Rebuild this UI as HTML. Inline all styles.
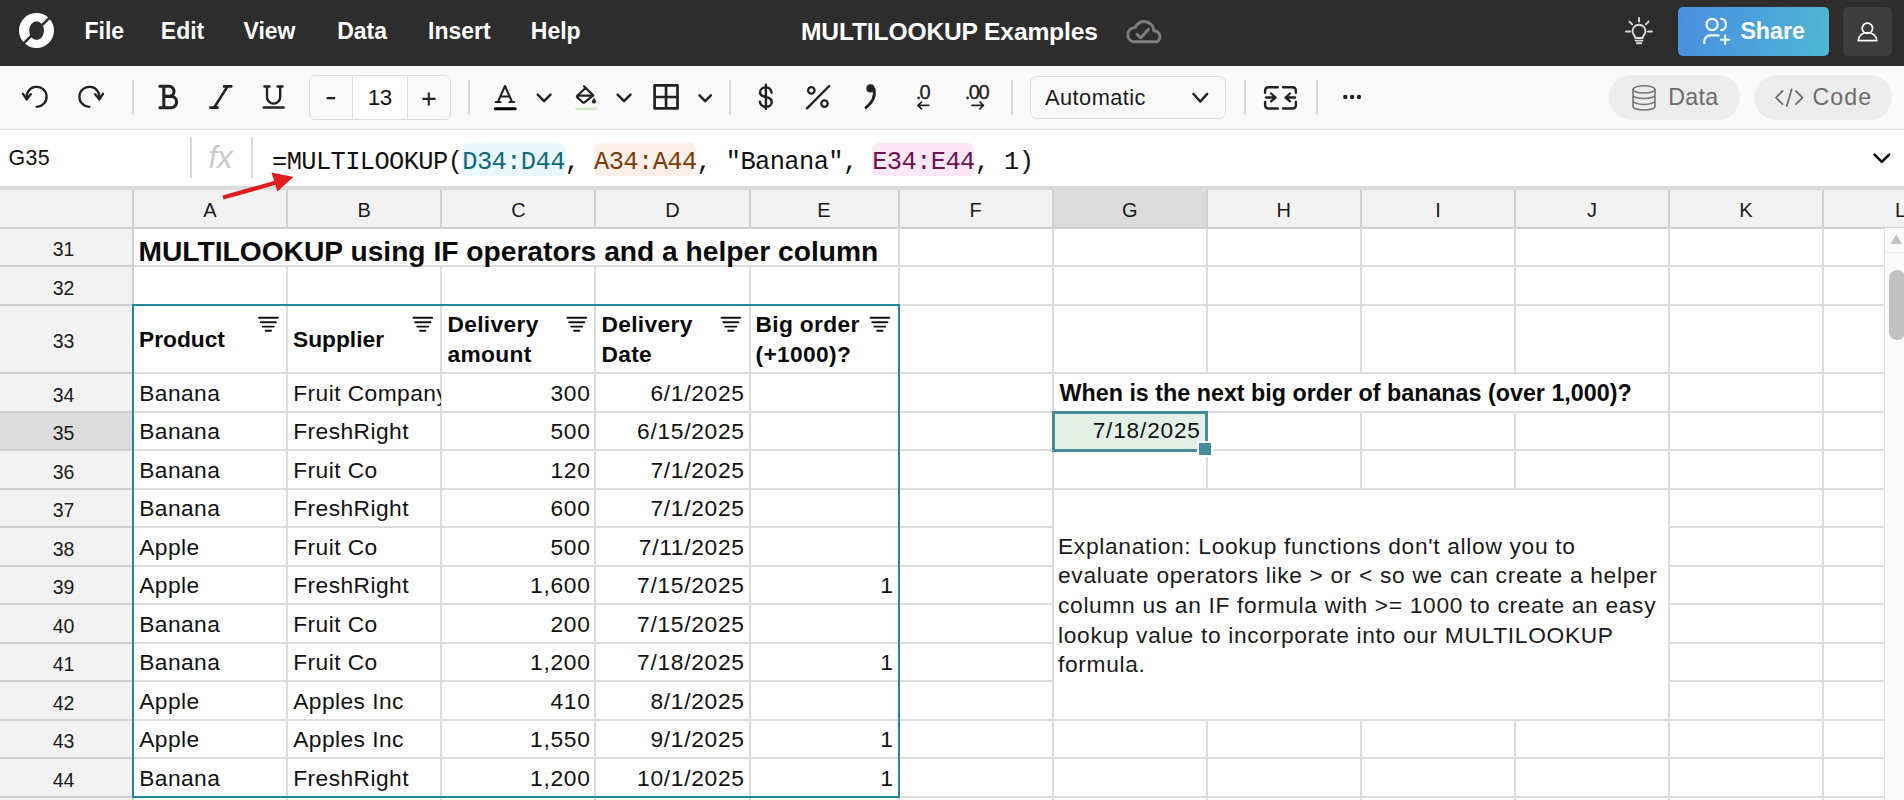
<!DOCTYPE html>
<html><head><meta charset="utf-8"><title>MULTILOOKUP Examples</title>
<style>
html,body{margin:0;padding:0;}
body{width:1904px;height:800px;overflow:hidden;position:relative;background:#fff;font-family:'Liberation Sans', sans-serif;}
.t{position:absolute;white-space:pre;}
.r{position:absolute;}
svg.ov{position:absolute;left:0;top:0;}
</style></head><body>
<div class="r" style="left:0.00px;top:190.00px;width:1904.00px;height:36.50px;background:#f2f2f2;"></div><div class="r" style="left:1053.60px;top:190.00px;width:152.20px;height:36.50px;background:#dcdcdc;"></div><div class="r" style="left:0.00px;top:228.50px;width:132.00px;height:572.00px;background:#f2f2f2;"></div><div class="r" style="left:0.00px;top:412.90px;width:132.00px;height:36.50px;background:#dcdcdc;"></div><div class="r" style="left:0.00px;top:226.50px;width:1904.00px;height:2.00px;background:#d0d0d0;"></div><div class="r" style="left:0.00px;top:265.00px;width:132.00px;height:2.00px;background:#d0d0d0;"></div><div class="r" style="left:134.00px;top:265.00px;width:1749.60px;height:2.00px;background:#dcdcdc;"></div><div class="r" style="left:0.00px;top:303.50px;width:132.00px;height:2.00px;background:#d0d0d0;"></div><div class="r" style="left:134.00px;top:303.50px;width:1749.60px;height:2.00px;background:#dcdcdc;"></div><div class="r" style="left:0.00px;top:372.40px;width:132.00px;height:2.00px;background:#d0d0d0;"></div><div class="r" style="left:134.00px;top:372.40px;width:1749.60px;height:2.00px;background:#dcdcdc;"></div><div class="r" style="left:0.00px;top:410.90px;width:132.00px;height:2.00px;background:#d0d0d0;"></div><div class="r" style="left:134.00px;top:410.90px;width:1749.60px;height:2.00px;background:#dcdcdc;"></div><div class="r" style="left:0.00px;top:449.40px;width:132.00px;height:2.00px;background:#d0d0d0;"></div><div class="r" style="left:134.00px;top:449.40px;width:1749.60px;height:2.00px;background:#dcdcdc;"></div><div class="r" style="left:0.00px;top:487.90px;width:132.00px;height:2.00px;background:#d0d0d0;"></div><div class="r" style="left:134.00px;top:487.90px;width:1749.60px;height:2.00px;background:#dcdcdc;"></div><div class="r" style="left:0.00px;top:526.40px;width:132.00px;height:2.00px;background:#d0d0d0;"></div><div class="r" style="left:134.00px;top:526.40px;width:1749.60px;height:2.00px;background:#dcdcdc;"></div><div class="r" style="left:0.00px;top:564.90px;width:132.00px;height:2.00px;background:#d0d0d0;"></div><div class="r" style="left:134.00px;top:564.90px;width:1749.60px;height:2.00px;background:#dcdcdc;"></div><div class="r" style="left:0.00px;top:603.40px;width:132.00px;height:2.00px;background:#d0d0d0;"></div><div class="r" style="left:134.00px;top:603.40px;width:1749.60px;height:2.00px;background:#dcdcdc;"></div><div class="r" style="left:0.00px;top:641.90px;width:132.00px;height:2.00px;background:#d0d0d0;"></div><div class="r" style="left:134.00px;top:641.90px;width:1749.60px;height:2.00px;background:#dcdcdc;"></div><div class="r" style="left:0.00px;top:680.40px;width:132.00px;height:2.00px;background:#d0d0d0;"></div><div class="r" style="left:134.00px;top:680.40px;width:1749.60px;height:2.00px;background:#dcdcdc;"></div><div class="r" style="left:0.00px;top:718.90px;width:132.00px;height:2.00px;background:#d0d0d0;"></div><div class="r" style="left:134.00px;top:718.90px;width:1749.60px;height:2.00px;background:#dcdcdc;"></div><div class="r" style="left:0.00px;top:757.40px;width:132.00px;height:2.00px;background:#d0d0d0;"></div><div class="r" style="left:134.00px;top:757.40px;width:1749.60px;height:2.00px;background:#dcdcdc;"></div><div class="r" style="left:0.00px;top:795.90px;width:132.00px;height:2.00px;background:#d0d0d0;"></div><div class="r" style="left:134.00px;top:795.90px;width:1749.60px;height:2.00px;background:#dcdcdc;"></div><div class="r" style="left:132.00px;top:190.00px;width:2.00px;height:36.50px;background:#d0d0d0;"></div><div class="r" style="left:286.00px;top:190.00px;width:2.00px;height:36.50px;background:#d0d0d0;"></div><div class="r" style="left:440.40px;top:190.00px;width:2.00px;height:36.50px;background:#d0d0d0;"></div><div class="r" style="left:594.40px;top:190.00px;width:2.00px;height:36.50px;background:#d0d0d0;"></div><div class="r" style="left:748.50px;top:190.00px;width:2.00px;height:36.50px;background:#d0d0d0;"></div><div class="r" style="left:897.50px;top:190.00px;width:2.00px;height:36.50px;background:#d0d0d0;"></div><div class="r" style="left:1051.60px;top:190.00px;width:2.00px;height:36.50px;background:#d0d0d0;"></div><div class="r" style="left:1205.80px;top:190.00px;width:2.00px;height:36.50px;background:#d0d0d0;"></div><div class="r" style="left:1359.90px;top:190.00px;width:2.00px;height:36.50px;background:#d0d0d0;"></div><div class="r" style="left:1514.00px;top:190.00px;width:2.00px;height:36.50px;background:#d0d0d0;"></div><div class="r" style="left:1668.00px;top:190.00px;width:2.00px;height:36.50px;background:#d0d0d0;"></div><div class="r" style="left:1822.00px;top:190.00px;width:2.00px;height:36.50px;background:#d0d0d0;"></div><div class="r" style="left:132.00px;top:228.30px;width:2.00px;height:572.00px;background:#d0d0d0;"></div><div class="r" style="left:286.00px;top:228.30px;width:2.00px;height:572.00px;background:#dcdcdc;"></div><div class="r" style="left:440.40px;top:228.30px;width:2.00px;height:572.00px;background:#dcdcdc;"></div><div class="r" style="left:594.40px;top:228.30px;width:2.00px;height:572.00px;background:#dcdcdc;"></div><div class="r" style="left:748.50px;top:228.30px;width:2.00px;height:572.00px;background:#dcdcdc;"></div><div class="r" style="left:897.50px;top:228.30px;width:2.00px;height:572.00px;background:#dcdcdc;"></div><div class="r" style="left:1051.60px;top:228.30px;width:2.00px;height:572.00px;background:#dcdcdc;"></div><div class="r" style="left:1205.80px;top:228.30px;width:2.00px;height:572.00px;background:#dcdcdc;"></div><div class="r" style="left:1359.90px;top:228.30px;width:2.00px;height:572.00px;background:#dcdcdc;"></div><div class="r" style="left:1514.00px;top:228.30px;width:2.00px;height:572.00px;background:#dcdcdc;"></div><div class="r" style="left:1668.00px;top:228.30px;width:2.00px;height:572.00px;background:#dcdcdc;"></div><div class="r" style="left:1822.00px;top:228.30px;width:2.00px;height:572.00px;background:#dcdcdc;"></div><div class="r" style="left:134.00px;top:228.50px;width:763.50px;height:36.50px;background:#fff;"></div><div class="r" style="left:1053.60px;top:489.90px;width:614.40px;height:229.00px;background:#fff;"></div><div class="r" style="left:1053.60px;top:374.40px;width:614.40px;height:36.50px;background:#fff;"></div><div class="t" style="top:200.27px;font:normal 400 20px/20px 'Liberation Sans', sans-serif;color:#1a1a1a;left:-390.00px;width:1200px;text-align:center;">A</div><div class="t" style="top:200.27px;font:normal 400 20px/20px 'Liberation Sans', sans-serif;color:#1a1a1a;left:-235.80px;width:1200px;text-align:center;">B</div><div class="t" style="top:200.27px;font:normal 400 20px/20px 'Liberation Sans', sans-serif;color:#1a1a1a;left:-81.60px;width:1200px;text-align:center;">C</div><div class="t" style="top:200.27px;font:normal 400 20px/20px 'Liberation Sans', sans-serif;color:#1a1a1a;left:72.45px;width:1200px;text-align:center;">D</div><div class="t" style="top:200.27px;font:normal 400 20px/20px 'Liberation Sans', sans-serif;color:#1a1a1a;left:224.00px;width:1200px;text-align:center;">E</div><div class="t" style="top:200.27px;font:normal 400 20px/20px 'Liberation Sans', sans-serif;color:#1a1a1a;left:375.55px;width:1200px;text-align:center;">F</div><div class="t" style="top:200.27px;font:normal 400 20px/20px 'Liberation Sans', sans-serif;color:#1a1a1a;left:529.70px;width:1200px;text-align:center;">G</div><div class="t" style="top:200.27px;font:normal 400 20px/20px 'Liberation Sans', sans-serif;color:#1a1a1a;left:683.85px;width:1200px;text-align:center;">H</div><div class="t" style="top:200.27px;font:normal 400 20px/20px 'Liberation Sans', sans-serif;color:#1a1a1a;left:837.95px;width:1200px;text-align:center;">I</div><div class="t" style="top:200.27px;font:normal 400 20px/20px 'Liberation Sans', sans-serif;color:#1a1a1a;left:992.00px;width:1200px;text-align:center;">J</div><div class="t" style="top:200.27px;font:normal 400 20px/20px 'Liberation Sans', sans-serif;color:#1a1a1a;left:1146.00px;width:1200px;text-align:center;">K</div><div class="t" style="top:200.27px;font:normal 400 20px/20px 'Liberation Sans', sans-serif;color:#1a1a1a;left:1300.50px;width:1200px;text-align:center;">L</div><div class="t" style="top:240.04px;font:normal 400 19.5px/19.5px 'Liberation Sans', sans-serif;color:#1a1a1a;left:-536.50px;width:1200px;text-align:center;">31</div><div class="t" style="top:278.54px;font:normal 400 19.5px/19.5px 'Liberation Sans', sans-serif;color:#1a1a1a;left:-536.50px;width:1200px;text-align:center;">32</div><div class="t" style="top:332.24px;font:normal 400 19.5px/19.5px 'Liberation Sans', sans-serif;color:#1a1a1a;left:-536.50px;width:1200px;text-align:center;">33</div><div class="t" style="top:385.94px;font:normal 400 19.5px/19.5px 'Liberation Sans', sans-serif;color:#1a1a1a;left:-536.50px;width:1200px;text-align:center;">34</div><div class="t" style="top:424.44px;font:normal 400 19.5px/19.5px 'Liberation Sans', sans-serif;color:#1a1a1a;left:-536.50px;width:1200px;text-align:center;">35</div><div class="t" style="top:462.94px;font:normal 400 19.5px/19.5px 'Liberation Sans', sans-serif;color:#1a1a1a;left:-536.50px;width:1200px;text-align:center;">36</div><div class="t" style="top:501.44px;font:normal 400 19.5px/19.5px 'Liberation Sans', sans-serif;color:#1a1a1a;left:-536.50px;width:1200px;text-align:center;">37</div><div class="t" style="top:539.94px;font:normal 400 19.5px/19.5px 'Liberation Sans', sans-serif;color:#1a1a1a;left:-536.50px;width:1200px;text-align:center;">38</div><div class="t" style="top:578.44px;font:normal 400 19.5px/19.5px 'Liberation Sans', sans-serif;color:#1a1a1a;left:-536.50px;width:1200px;text-align:center;">39</div><div class="t" style="top:616.94px;font:normal 400 19.5px/19.5px 'Liberation Sans', sans-serif;color:#1a1a1a;left:-536.50px;width:1200px;text-align:center;">40</div><div class="t" style="top:655.44px;font:normal 400 19.5px/19.5px 'Liberation Sans', sans-serif;color:#1a1a1a;left:-536.50px;width:1200px;text-align:center;">41</div><div class="t" style="top:693.94px;font:normal 400 19.5px/19.5px 'Liberation Sans', sans-serif;color:#1a1a1a;left:-536.50px;width:1200px;text-align:center;">42</div><div class="t" style="top:732.44px;font:normal 400 19.5px/19.5px 'Liberation Sans', sans-serif;color:#1a1a1a;left:-536.50px;width:1200px;text-align:center;">43</div><div class="t" style="top:770.94px;font:normal 400 19.5px/19.5px 'Liberation Sans', sans-serif;color:#1a1a1a;left:-536.50px;width:1200px;text-align:center;">44</div><div class="r" style="left:1883.60px;top:228.30px;width:20.40px;height:572.00px;background:#fafafa;border-left:1px solid #e2e2e2;"></div><div class="r" style="left:1884.60px;top:252.00px;width:19.40px;height:1.00px;background:#e6e6e6;"></div><div class="r" style="left:1888.5px;top:270px;width:16px;height:70px;background:#c2c2c2;border-radius:8px;"></div><svg class="ov" width="1904" height="800" style="left:0;top:0"><path d="M1890.6,244 L1896.3,234.2 L1902,244 Z" fill="#c4c4c4"/></svg><div class="t" style="top:236.63px;font:normal 700 28.2px/28.2px 'Liberation Sans', sans-serif;color:#0a0a0a;left:138.50px;">MULTILOOKUP using IF operators and a helper column</div><div class="t" style="top:327.74px;font:normal 700 22.75px/22.75px 'Liberation Sans', sans-serif;color:#0a0a0a;left:139.00px;">Product</div><div class="t" style="top:327.74px;font:normal 700 22.75px/22.75px 'Liberation Sans', sans-serif;color:#0a0a0a;left:293.00px;">Supplier</div><div class="t" style="top:313.04px;font:normal 700 22.75px/22.75px 'Liberation Sans', sans-serif;color:#0a0a0a;letter-spacing:0.35px;left:447.40px;">Delivery</div><div class="t" style="top:342.54px;font:normal 700 22.75px/22.75px 'Liberation Sans', sans-serif;color:#0a0a0a;letter-spacing:0.35px;left:447.40px;">amount</div><div class="t" style="top:313.04px;font:normal 700 22.75px/22.75px 'Liberation Sans', sans-serif;color:#0a0a0a;letter-spacing:0.35px;left:601.40px;">Delivery</div><div class="t" style="top:342.54px;font:normal 700 22.75px/22.75px 'Liberation Sans', sans-serif;color:#0a0a0a;letter-spacing:0.35px;left:601.40px;">Date</div><div class="t" style="top:313.04px;font:normal 700 22.75px/22.75px 'Liberation Sans', sans-serif;color:#0a0a0a;letter-spacing:0.35px;left:755.50px;">Big order</div><div class="t" style="top:342.54px;font:normal 700 22.75px/22.75px 'Liberation Sans', sans-serif;color:#0a0a0a;letter-spacing:0.35px;left:755.50px;">(+1000)?</div><div class="t" style="top:381.99px;font:normal 400 22.75px/22.75px 'Liberation Sans', sans-serif;color:#111;letter-spacing:0.45px;left:139.20px;">Banana</div><div class="r" style="left:288.00px;top:374.40px;width:152.90px;height:36.50px;overflow:hidden;"><div class="t" style="top:7.59px;font:normal 400 22.75px/22.75px 'Liberation Sans', sans-serif;color:#111;letter-spacing:0.45px;left:5.20px;">Fruit Company</div></div><div class="t" style="top:381.99px;font:normal 400 22.75px/22.75px 'Liberation Sans', sans-serif;color:#111;letter-spacing:0.7px;left:-609.50px;width:1200px;text-align:right;">300</div><div class="t" style="top:381.99px;font:normal 400 22.75px/22.75px 'Liberation Sans', sans-serif;color:#111;letter-spacing:0.7px;left:-455.40px;width:1200px;text-align:right;">6/1/2025</div><div class="t" style="top:420.49px;font:normal 400 22.75px/22.75px 'Liberation Sans', sans-serif;color:#111;letter-spacing:0.45px;left:139.20px;">Banana</div><div class="t" style="top:420.49px;font:normal 400 22.75px/22.75px 'Liberation Sans', sans-serif;color:#111;letter-spacing:0.45px;left:293.20px;">FreshRight</div><div class="t" style="top:420.49px;font:normal 400 22.75px/22.75px 'Liberation Sans', sans-serif;color:#111;letter-spacing:0.7px;left:-609.50px;width:1200px;text-align:right;">500</div><div class="t" style="top:420.49px;font:normal 400 22.75px/22.75px 'Liberation Sans', sans-serif;color:#111;letter-spacing:0.7px;left:-455.40px;width:1200px;text-align:right;">6/15/2025</div><div class="t" style="top:458.99px;font:normal 400 22.75px/22.75px 'Liberation Sans', sans-serif;color:#111;letter-spacing:0.45px;left:139.20px;">Banana</div><div class="t" style="top:458.99px;font:normal 400 22.75px/22.75px 'Liberation Sans', sans-serif;color:#111;letter-spacing:0.45px;left:293.20px;">Fruit Co</div><div class="t" style="top:458.99px;font:normal 400 22.75px/22.75px 'Liberation Sans', sans-serif;color:#111;letter-spacing:0.7px;left:-609.50px;width:1200px;text-align:right;">120</div><div class="t" style="top:458.99px;font:normal 400 22.75px/22.75px 'Liberation Sans', sans-serif;color:#111;letter-spacing:0.7px;left:-455.40px;width:1200px;text-align:right;">7/1/2025</div><div class="t" style="top:497.49px;font:normal 400 22.75px/22.75px 'Liberation Sans', sans-serif;color:#111;letter-spacing:0.45px;left:139.20px;">Banana</div><div class="t" style="top:497.49px;font:normal 400 22.75px/22.75px 'Liberation Sans', sans-serif;color:#111;letter-spacing:0.45px;left:293.20px;">FreshRight</div><div class="t" style="top:497.49px;font:normal 400 22.75px/22.75px 'Liberation Sans', sans-serif;color:#111;letter-spacing:0.7px;left:-609.50px;width:1200px;text-align:right;">600</div><div class="t" style="top:497.49px;font:normal 400 22.75px/22.75px 'Liberation Sans', sans-serif;color:#111;letter-spacing:0.7px;left:-455.40px;width:1200px;text-align:right;">7/1/2025</div><div class="t" style="top:535.99px;font:normal 400 22.75px/22.75px 'Liberation Sans', sans-serif;color:#111;letter-spacing:0.45px;left:139.20px;">Apple</div><div class="t" style="top:535.99px;font:normal 400 22.75px/22.75px 'Liberation Sans', sans-serif;color:#111;letter-spacing:0.45px;left:293.20px;">Fruit Co</div><div class="t" style="top:535.99px;font:normal 400 22.75px/22.75px 'Liberation Sans', sans-serif;color:#111;letter-spacing:0.7px;left:-609.50px;width:1200px;text-align:right;">500</div><div class="t" style="top:535.99px;font:normal 400 22.75px/22.75px 'Liberation Sans', sans-serif;color:#111;letter-spacing:0.7px;left:-455.40px;width:1200px;text-align:right;">7/11/2025</div><div class="t" style="top:574.49px;font:normal 400 22.75px/22.75px 'Liberation Sans', sans-serif;color:#111;letter-spacing:0.45px;left:139.20px;">Apple</div><div class="t" style="top:574.49px;font:normal 400 22.75px/22.75px 'Liberation Sans', sans-serif;color:#111;letter-spacing:0.45px;left:293.20px;">FreshRight</div><div class="t" style="top:574.49px;font:normal 400 22.75px/22.75px 'Liberation Sans', sans-serif;color:#111;letter-spacing:0.7px;left:-609.50px;width:1200px;text-align:right;">1,600</div><div class="t" style="top:574.49px;font:normal 400 22.75px/22.75px 'Liberation Sans', sans-serif;color:#111;letter-spacing:0.7px;left:-455.40px;width:1200px;text-align:right;">7/15/2025</div><div class="t" style="top:574.49px;font:normal 400 22.75px/22.75px 'Liberation Sans', sans-serif;color:#111;letter-spacing:0.7px;left:-306.40px;width:1200px;text-align:right;">1</div><div class="t" style="top:612.99px;font:normal 400 22.75px/22.75px 'Liberation Sans', sans-serif;color:#111;letter-spacing:0.45px;left:139.20px;">Banana</div><div class="t" style="top:612.99px;font:normal 400 22.75px/22.75px 'Liberation Sans', sans-serif;color:#111;letter-spacing:0.45px;left:293.20px;">Fruit Co</div><div class="t" style="top:612.99px;font:normal 400 22.75px/22.75px 'Liberation Sans', sans-serif;color:#111;letter-spacing:0.7px;left:-609.50px;width:1200px;text-align:right;">200</div><div class="t" style="top:612.99px;font:normal 400 22.75px/22.75px 'Liberation Sans', sans-serif;color:#111;letter-spacing:0.7px;left:-455.40px;width:1200px;text-align:right;">7/15/2025</div><div class="t" style="top:651.49px;font:normal 400 22.75px/22.75px 'Liberation Sans', sans-serif;color:#111;letter-spacing:0.45px;left:139.20px;">Banana</div><div class="t" style="top:651.49px;font:normal 400 22.75px/22.75px 'Liberation Sans', sans-serif;color:#111;letter-spacing:0.45px;left:293.20px;">Fruit Co</div><div class="t" style="top:651.49px;font:normal 400 22.75px/22.75px 'Liberation Sans', sans-serif;color:#111;letter-spacing:0.7px;left:-609.50px;width:1200px;text-align:right;">1,200</div><div class="t" style="top:651.49px;font:normal 400 22.75px/22.75px 'Liberation Sans', sans-serif;color:#111;letter-spacing:0.7px;left:-455.40px;width:1200px;text-align:right;">7/18/2025</div><div class="t" style="top:651.49px;font:normal 400 22.75px/22.75px 'Liberation Sans', sans-serif;color:#111;letter-spacing:0.7px;left:-306.40px;width:1200px;text-align:right;">1</div><div class="t" style="top:689.99px;font:normal 400 22.75px/22.75px 'Liberation Sans', sans-serif;color:#111;letter-spacing:0.45px;left:139.20px;">Apple</div><div class="t" style="top:689.99px;font:normal 400 22.75px/22.75px 'Liberation Sans', sans-serif;color:#111;letter-spacing:0.45px;left:293.20px;">Apples Inc</div><div class="t" style="top:689.99px;font:normal 400 22.75px/22.75px 'Liberation Sans', sans-serif;color:#111;letter-spacing:0.7px;left:-609.50px;width:1200px;text-align:right;">410</div><div class="t" style="top:689.99px;font:normal 400 22.75px/22.75px 'Liberation Sans', sans-serif;color:#111;letter-spacing:0.7px;left:-455.40px;width:1200px;text-align:right;">8/1/2025</div><div class="t" style="top:728.49px;font:normal 400 22.75px/22.75px 'Liberation Sans', sans-serif;color:#111;letter-spacing:0.45px;left:139.20px;">Apple</div><div class="t" style="top:728.49px;font:normal 400 22.75px/22.75px 'Liberation Sans', sans-serif;color:#111;letter-spacing:0.45px;left:293.20px;">Apples Inc</div><div class="t" style="top:728.49px;font:normal 400 22.75px/22.75px 'Liberation Sans', sans-serif;color:#111;letter-spacing:0.7px;left:-609.50px;width:1200px;text-align:right;">1,550</div><div class="t" style="top:728.49px;font:normal 400 22.75px/22.75px 'Liberation Sans', sans-serif;color:#111;letter-spacing:0.7px;left:-455.40px;width:1200px;text-align:right;">9/1/2025</div><div class="t" style="top:728.49px;font:normal 400 22.75px/22.75px 'Liberation Sans', sans-serif;color:#111;letter-spacing:0.7px;left:-306.40px;width:1200px;text-align:right;">1</div><div class="t" style="top:766.99px;font:normal 400 22.75px/22.75px 'Liberation Sans', sans-serif;color:#111;letter-spacing:0.45px;left:139.20px;">Banana</div><div class="t" style="top:766.99px;font:normal 400 22.75px/22.75px 'Liberation Sans', sans-serif;color:#111;letter-spacing:0.45px;left:293.20px;">FreshRight</div><div class="t" style="top:766.99px;font:normal 400 22.75px/22.75px 'Liberation Sans', sans-serif;color:#111;letter-spacing:0.7px;left:-609.50px;width:1200px;text-align:right;">1,200</div><div class="t" style="top:766.99px;font:normal 400 22.75px/22.75px 'Liberation Sans', sans-serif;color:#111;letter-spacing:0.7px;left:-455.40px;width:1200px;text-align:right;">10/1/2025</div><div class="t" style="top:766.99px;font:normal 400 22.75px/22.75px 'Liberation Sans', sans-serif;color:#111;letter-spacing:0.7px;left:-306.40px;width:1200px;text-align:right;">1</div><div class="r" style="left:132px;top:303.8px;width:766px;height:494px;border:2px solid #22889a;box-sizing:border-box;width:768px;"></div><svg class="ov" width="1904" height="800"><g stroke="#111" stroke-width="1.9" stroke-linecap="round"><line x1="259.00" y1="317.80" x2="277.80" y2="317.80"/><line x1="260.80" y1="322.20" x2="275.90" y2="322.20"/><line x1="262.80" y1="326.60" x2="273.80" y2="326.60"/><line x1="265.70" y1="330.80" x2="271.00" y2="330.80"/><line x1="413.40" y1="317.80" x2="432.20" y2="317.80"/><line x1="415.20" y1="322.20" x2="430.30" y2="322.20"/><line x1="417.20" y1="326.60" x2="428.20" y2="326.60"/><line x1="420.10" y1="330.80" x2="425.40" y2="330.80"/><line x1="567.40" y1="317.80" x2="586.20" y2="317.80"/><line x1="569.20" y1="322.20" x2="584.30" y2="322.20"/><line x1="571.20" y1="326.60" x2="582.20" y2="326.60"/><line x1="574.10" y1="330.80" x2="579.40" y2="330.80"/><line x1="721.50" y1="317.80" x2="740.30" y2="317.80"/><line x1="723.30" y1="322.20" x2="738.40" y2="322.20"/><line x1="725.30" y1="326.60" x2="736.30" y2="326.60"/><line x1="728.20" y1="330.80" x2="733.50" y2="330.80"/><line x1="870.50" y1="317.80" x2="889.30" y2="317.80"/><line x1="872.30" y1="322.20" x2="887.40" y2="322.20"/><line x1="874.30" y1="326.60" x2="885.30" y2="326.60"/><line x1="877.20" y1="330.80" x2="882.50" y2="330.80"/></g></svg><div class="t" style="top:381.78px;font:normal 700 23.3px/23.3px 'Liberation Sans', sans-serif;color:#0a0a0a;left:1059.50px;">When is the next big order of bananas (over 1,000)?</div><div class="r" style="left:1051.60px;top:411.30px;width:156.20px;height:40.30px;background:#e2f0e6;border:3px solid #468d9b;box-sizing:border-box;"></div><div class="t" style="top:420.27px;font:normal 400 22.6px/22.6px 'Liberation Sans', sans-serif;color:#111;letter-spacing:0.85px;left:0.80px;width:1200px;text-align:right;">7/18/2025</div><div class="r" style="left:1196.50px;top:440.50px;width:16.00px;height:16.00px;background:#fff;"></div><div class="r" style="left:1198.80px;top:442.60px;width:12.00px;height:12.00px;background:#468d9b;"></div><div class="t" style="top:534.74px;font:normal 400 22.75px/22.75px 'Liberation Sans', sans-serif;color:#1a1a1a;letter-spacing:0.68px;left:1058.00px;">Explanation: Lookup functions don&#x27;t allow you to</div><div class="t" style="top:564.34px;font:normal 400 22.75px/22.75px 'Liberation Sans', sans-serif;color:#1a1a1a;letter-spacing:0.68px;left:1058.00px;">evaluate operators like &gt; or &lt; so we can create a helper</div><div class="t" style="top:593.94px;font:normal 400 22.75px/22.75px 'Liberation Sans', sans-serif;color:#1a1a1a;letter-spacing:0.68px;left:1058.00px;">column us an IF formula with &gt;= 1000 to create an easy</div><div class="t" style="top:623.54px;font:normal 400 22.75px/22.75px 'Liberation Sans', sans-serif;color:#1a1a1a;letter-spacing:0.68px;left:1058.00px;">lookup value to incorporate into our MULTILOOKUP</div><div class="t" style="top:653.14px;font:normal 400 22.75px/22.75px 'Liberation Sans', sans-serif;color:#1a1a1a;letter-spacing:0.68px;left:1058.00px;">formula.</div><div class="r" style="left:0.00px;top:0.00px;width:1904.00px;height:65.60px;background:#2d2d2d;"></div><div class="r" style="left:1677.9px;top:7px;width:151.1px;height:48.8px;border-radius:5px;background:linear-gradient(100deg,#4a8fe0 0%,#4ba4da 55%,#4fb8d2 100%);"></div><div class="r" style="left:1843px;top:7px;width:49px;height:48.7px;border-radius:5px;background:#3d3d3d;"></div><div class="t" style="top:19.53px;font:normal 700 23.0px/23.0px 'Liberation Sans', sans-serif;color:#fff;left:84.50px;">File</div><div class="t" style="top:19.53px;font:normal 700 23.0px/23.0px 'Liberation Sans', sans-serif;color:#fff;left:160.80px;">Edit</div><div class="t" style="top:19.53px;font:normal 700 23.0px/23.0px 'Liberation Sans', sans-serif;color:#fff;left:243.50px;">View</div><div class="t" style="top:19.53px;font:normal 700 23.0px/23.0px 'Liberation Sans', sans-serif;color:#fff;left:337.20px;">Data</div><div class="t" style="top:19.53px;font:normal 700 23.0px/23.0px 'Liberation Sans', sans-serif;color:#fff;left:428.00px;">Insert</div><div class="t" style="top:19.53px;font:normal 700 23.0px/23.0px 'Liberation Sans', sans-serif;color:#fff;left:530.80px;">Help</div><div class="t" style="top:20.18px;font:normal 700 24.6px/24.6px 'Liberation Sans', sans-serif;color:#fff;letter-spacing:-0.15px;left:801.00px;">MULTILOOKUP Examples</div><div class="t" style="top:19.76px;font:normal 700 23.2px/23.2px 'Liberation Sans', sans-serif;color:#fff;left:1740.40px;">Share</div><div class="r" style="left:0.00px;top:65.60px;width:1904.00px;height:63.40px;background:#fafafa;"></div><div class="r" style="left:0.00px;top:129.00px;width:1904.00px;height:1.20px;background:#dedede;"></div><div class="r" style="left:132.00px;top:80.30px;width:2.00px;height:34.30px;background:#d9d9d9;"></div><div class="r" style="left:468.40px;top:80.30px;width:2.00px;height:34.30px;background:#d9d9d9;"></div><div class="r" style="left:728.90px;top:80.30px;width:2.00px;height:34.30px;background:#d9d9d9;"></div><div class="r" style="left:1010.90px;top:80.30px;width:2.00px;height:34.30px;background:#d9d9d9;"></div><div class="r" style="left:1244.00px;top:80.30px;width:2.00px;height:34.30px;background:#d9d9d9;"></div><div class="r" style="left:1315.80px;top:80.30px;width:2.00px;height:34.30px;background:#d9d9d9;"></div><div class="r" style="left:309.2px;top:75.2px;width:141.5px;height:44.4px;border:1px solid #dcdcdc;border-radius:6px;box-sizing:border-box;background:#fafafa;"></div><div class="r" style="left:352.50px;top:76.20px;width:55.00px;height:42.40px;background:#fff;"></div><div class="r" style="left:352.00px;top:76.20px;width:1.00px;height:42.40px;background:#dcdcdc;"></div><div class="r" style="left:407.00px;top:76.20px;width:1.00px;height:42.40px;background:#dcdcdc;"></div><div class="t" style="top:87.32px;font:normal 400 22.3px/22.3px 'Liberation Sans', sans-serif;color:#111;letter-spacing:-0.3px;left:-220.20px;width:1200px;text-align:center;">13</div><div class="r" style="left:1030.4px;top:76.4px;width:195.2px;height:43.1px;border:1px solid #dcdcdc;border-radius:6px;box-sizing:border-box;"></div><div class="t" style="top:87.15px;font:normal 400 21.8px/21.8px 'Liberation Sans', sans-serif;color:#1a1a1a;letter-spacing:0.45px;left:1045.00px;">Automatic</div><div class="r" style="left:1609.3px;top:74.8px;width:130.7px;height:45px;border-radius:22.5px;background:#ececec;"></div><div class="r" style="left:1754px;top:74.8px;width:137.9px;height:45px;border-radius:22.5px;background:#ececec;"></div><div class="t" style="top:85.96px;font:normal 400 23.2px/23.2px 'Liberation Sans', sans-serif;color:#6b6b6b;letter-spacing:0.3px;left:1668.30px;">Data</div><div class="t" style="top:85.96px;font:normal 400 23.2px/23.2px 'Liberation Sans', sans-serif;color:#6b6b6b;letter-spacing:1.0px;left:1812.60px;">Code</div><svg class="ov" width="1904" height="800"><path fill="#fff" fill-rule="evenodd" d="M19,30.5 A17.5,17.5 0 0 1 54,30.5 A17.5,17.5 0 0 1 19,30.5 Z M29.2,30.6 A7.4,9.45 0 0 0 44,30.6 A7.4,9.45 0 0 0 29.2,30.6 Z"/><line x1="20.3" y1="46.6" x2="52.7" y2="14.6" stroke="#2d2d2d" stroke-width="2.6"/><g fill="none" stroke="#7e7e7e" stroke-width="2.9" stroke-linejoin="round" stroke-linecap="round"><path transform="translate(1144,43.3) scale(1.085,1.055) translate(-1144,-43.3)" d="M1134,41.8 A6.8,6.8 0 0 1 1135.8,28.45 A9,9 0 0 1 1153.2,31.6 A5.5,5.5 0 0 1 1156,41.8 Z" stroke-width="2.75"/><path d="M1137,34.4 L1140.9,37.8 L1148.5,29.2"/></g><g fill="none" stroke="#dcdcdc" stroke-width="1.9" stroke-linecap="round"><line x1="1639" y1="18" x2="1639" y2="21.6"/><line x1="1626" y1="31.5" x2="1630" y2="31.5"/><line x1="1648" y1="31.5" x2="1652" y2="31.5"/><line x1="1629.4" y1="21.6" x2="1632.2" y2="24.4"/><line x1="1648.6" y1="21.6" x2="1645.8" y2="24.4"/><path d="M1635.5,38 C1635.5,35.8 1632.5,34.5 1632.5,31.2 A6.5,6.5 0 0 1 1645.5,31.2 C1645.5,34.5 1642.5,35.8 1642.5,38 Z"/><line x1="1635.6" y1="40.6" x2="1642.4" y2="40.6"/><line x1="1636.8" y1="43.2" x2="1641.2" y2="43.2"/></g><g fill="none" stroke="#fff" stroke-width="2.1" stroke-linecap="round"><circle cx="1712.1" cy="24.5" r="5.6"/><path d="M1721.2,18.8 A5.8,5.8 0 0 1 1721.2,30.2"/><path d="M1704.3,43.2 L1704.3,41.5 A6,6 0 0 1 1710.3,35.4 L1718.6,35.4"/><line x1="1725.1" y1="35.6" x2="1725.1" y2="44"/><line x1="1720.9" y1="39.8" x2="1729.3" y2="39.8"/></g><g fill="none" stroke="#fff" stroke-width="1.7"><circle cx="1867.4" cy="28.3" r="5.2"/><path d="M1858.2,40.7 A9.3,8.2 0 0 1 1876.8,40.7 Z" stroke-linejoin="round"/></g><g fill="none" stroke="#222" stroke-width="2.3" stroke-linecap="round" stroke-linejoin="round"><path d="M159.9,86.3 H169 A5.05,5.05 0 0 1 169,96.4 H163.8 M163.8,96.4 H171 A5.65,5.65 0 0 1 171,107.7 H159.9 M163.8,86.3 V107.7" stroke-width="3.1"/><path d="M36.6,106.8 A10,10 0 1 0 26.9,99.2"/><path d="M23,93.8 L26.7,99.3 L30.8,94.2"/><path d="M89.4,106.8 A10,10 0 1 1 99.1,99.2"/><path d="M103,93.8 L99.3,99.3 L95.2,94.2"/><path d="M224.1,86.4 L231.3,86.4 M227.4,86.6 L214.2,107.5 M210.3,107.6 L217.6,107.6" stroke-width="2.6"/><path d="M264.4,86.5 L269.6,86.5 M277.6,86.5 L282.6,86.5 M267,86.6 L267,97 A6.6,6.6 0 0 0 280.2,97 L280.2,86.6" stroke-width="2.4"/><path d="M263.8,107.5 L283.6,107.5" stroke-width="2.5"/><path d="M498.1,101.7 L505,86 L512,101.7 M501.5,96.5 L508.6,96.5 M495.7,102 L500.5,102 M509.5,102 L514.2,102" stroke-width="2.1"/><path d="M495.3,108.7 L515.2,108.7" stroke="#000" stroke-width="3"/><path d="M537.7,94.69999999999999 L544.1,101.1 L550.5,94.69999999999999" stroke-width="2.5"/><path d="M617.65,94.69999999999999 L624.05,101.1 L630.4499999999999,94.69999999999999" stroke-width="2.5"/><path d="M699.5,95.39999999999999 L705.2,101.1 L710.9000000000001,95.39999999999999" stroke-width="2.5"/><path d="M584,86.2 L593.2,95.4 L584.6,102.3 Q583.6,103 582.6,102.3 L577.3,97.4 Q576.5,96.5 577.3,95.7 L585.5,88" stroke-width="2.2"/><path d="M577.5,95.6 L593,95.6" stroke-width="2.2"/><path d="M594,98.4 Q595.9,100.7 595.9,101.3 A1.9,1.9 0 0 1 592.1,101.3 Q592.1,100.7 594,98.4 Z" fill="#222" stroke-width="0.6"/><path d="M576.6,108.8 L595.8,108.8" stroke="#d3ead0" stroke-width="2.8"/><path d="M654.6,85.4 H677.5 V108.4 H654.6 Z M666.05,85.4 V108.4 M654.6,97 H677.5" stroke-width="2.7"/><circle cx="811.3" cy="90.4" r="3.2" stroke-width="2.3"/><circle cx="824.5" cy="103.6" r="3.2" stroke-width="2.3"/><path d="M807,108.3 L829.2,86" stroke-width="2.4"/><path d="M771.6,92.6 C771,89.2 768.6,87.4 765.9,87.4 C762.6,87.4 760,89.6 760,92.4 C760,95.6 763,96.4 765.9,97 C769,97.6 771.8,98.6 771.8,102 C771.8,104.9 769.2,106.8 765.9,106.8 C762.8,106.8 760.4,105 759.8,101.6 M765.9,84.8 V109" stroke-width="2.4"/><circle cx="870.5" cy="88.4" r="4.1" fill="#222" stroke="none"/><path d="M874.2,89.5 Q876,99.5 866,107.6" stroke-width="2.9"/><path d="M928.8,105.4 H918 M921.5,102 L918,105.4 L921.5,108.8" stroke-width="1.7"/><path d="M972,105.4 H983.4 M979.9,102 L983.4,105.4 L979.9,108.8" stroke-width="1.7"/><path d="M1277.8,87.2 H1268.6 Q1265.1,87.2 1265.1,90.7 V92.8 M1265.1,102 V105 Q1265.1,108.5 1268.6,108.5 H1277.8 M1283,87.2 H1292.4 Q1295.9,87.2 1295.9,90.7 V92.8 M1295.9,102 V105 Q1295.9,108.5 1292.4,108.5 H1283" stroke-width="2.4"/><path d="M1266,97.5 H1275.4 M1271.1,93.5 L1275.6,97.5 L1271.1,101.3 M1295.1,97.5 H1285.7 M1290,93.5 L1285.5,97.5 L1290,101.3" stroke-width="2.3"/><path d="M326.6,98.1 H335.2 M422.4,98.9 H435.6 M428.8,92.4 V105.5" stroke-width="2.1" stroke-linecap="butt"/><path d="M1193.5,94 L1200.3,101.5 L1207.1,94" stroke-width="2.6"/></g><g fill="#222"><circle cx="1345.3" cy="97" r="2.2"/><circle cx="1352.1" cy="97" r="2.2"/><circle cx="1358.9" cy="97" r="2.2"/></g><g fill="none" stroke="#707070" stroke-width="1.5"><ellipse cx="1644" cy="89.4" rx="11" ry="3.6"/><path d="M1633,89.4 V106.4 A11,3.6 0 0 0 1655,106.4 V89.4 M1633,95 A11,3.6 0 0 0 1655,95 M1633,100.8 A11,3.6 0 0 0 1655,100.8"/></g><g fill="none" stroke="#6e6e6e" stroke-width="1.8" stroke-linecap="round" stroke-linejoin="round"><path d="M1782.5,91 L1776,97.6 L1782.5,104.2 M1796,91 L1802.5,97.6 L1796,104.2 M1791.6,89.4 L1786.8,106"/></g></svg><div class="t" style="top:81.87px;font:normal 400 20px/20px 'Liberation Sans', sans-serif;color:#222;letter-spacing:-1.8px;left:915.80px;-webkit-text-stroke:0.3px #222;">.0</div><div class="t" style="top:81.87px;font:normal 400 20px/20px 'Liberation Sans', sans-serif;color:#222;letter-spacing:-1.4px;left:964.70px;-webkit-text-stroke:0.3px #222;">.00</div><div class="r" style="left:0.00px;top:130.20px;width:1904.00px;height:55.80px;background:#fff;"></div><div class="r" style="left:0.00px;top:186.00px;width:1904.00px;height:4.00px;background:#dadada;"></div><div class="t" style="top:147.68px;font:normal 400 21.4px/21.4px 'Liberation Sans', sans-serif;color:#111;letter-spacing:0.3px;left:8.60px;">G35</div><div class="r" style="left:190.00px;top:137.40px;width:2.00px;height:41.00px;background:#dadada;"></div><div class="r" style="left:251.00px;top:137.40px;width:2.00px;height:41.00px;background:#dadada;"></div><div class="t" style="top:141.76px;font:italic 400 31px/31px 'Liberation Sans', sans-serif;color:#c9c9c9;left:208.50px;">fx</div><div class="r" style="left:462.3px;top:142.9px;width:102.3px;height:32.7px;border-radius:6px;background:#e8f8fc;"></div><div class="r" style="left:594.1px;top:142.9px;width:102.3px;height:32.7px;border-radius:6px;background:#fdf0e8;"></div><div class="r" style="left:872.2px;top:142.9px;width:102.3px;height:32.7px;border-radius:6px;background:#fce8f5;"></div><div class="t" style="top:150.04px;font:normal 400 25.4px/25.4px 'Liberation Mono', monospace;color:#111;letter-spacing:-0.6px;left:272.00px;">=MULTILOOKUP(</div><div class="t" style="top:150.04px;font:normal 400 25.4px/25.4px 'Liberation Mono', monospace;color:#0e6a7a;letter-spacing:-0.6px;left:462.32px;">D34:D44</div><div class="t" style="top:150.04px;font:normal 400 25.4px/25.4px 'Liberation Mono', monospace;color:#111;letter-spacing:-0.6px;left:564.80px;">, </div><div class="t" style="top:150.04px;font:normal 400 25.4px/25.4px 'Liberation Mono', monospace;color:#7a3a0a;letter-spacing:-0.6px;left:594.08px;">A34:A44</div><div class="t" style="top:150.04px;font:normal 400 25.4px/25.4px 'Liberation Mono', monospace;color:#111;letter-spacing:-0.6px;left:696.56px;">, &quot;Banana&quot;, </div><div class="t" style="top:150.04px;font:normal 400 25.4px/25.4px 'Liberation Mono', monospace;color:#6b1250;letter-spacing:-0.6px;left:872.24px;">E34:E44</div><div class="t" style="top:150.04px;font:normal 400 25.4px/25.4px 'Liberation Mono', monospace;color:#111;letter-spacing:-0.6px;left:974.72px;">, 1)</div><svg class="ov" width="1904" height="800"><path d="M1874.5,154.6 L1881.8,161.9 L1889.1,154.6" fill="none" stroke="#111" stroke-width="2.6" stroke-linecap="round" stroke-linejoin="round"/></svg><svg class="ov" width="1904" height="800"><line x1="223" y1="197.6" x2="276" y2="182.6" stroke="#e01c1c" stroke-width="4.2"/><path d="M293.5,176.9 L271.5,172.6 L277.4,191.6 Z" fill="#e01c1c"/></svg>
</body></html>
